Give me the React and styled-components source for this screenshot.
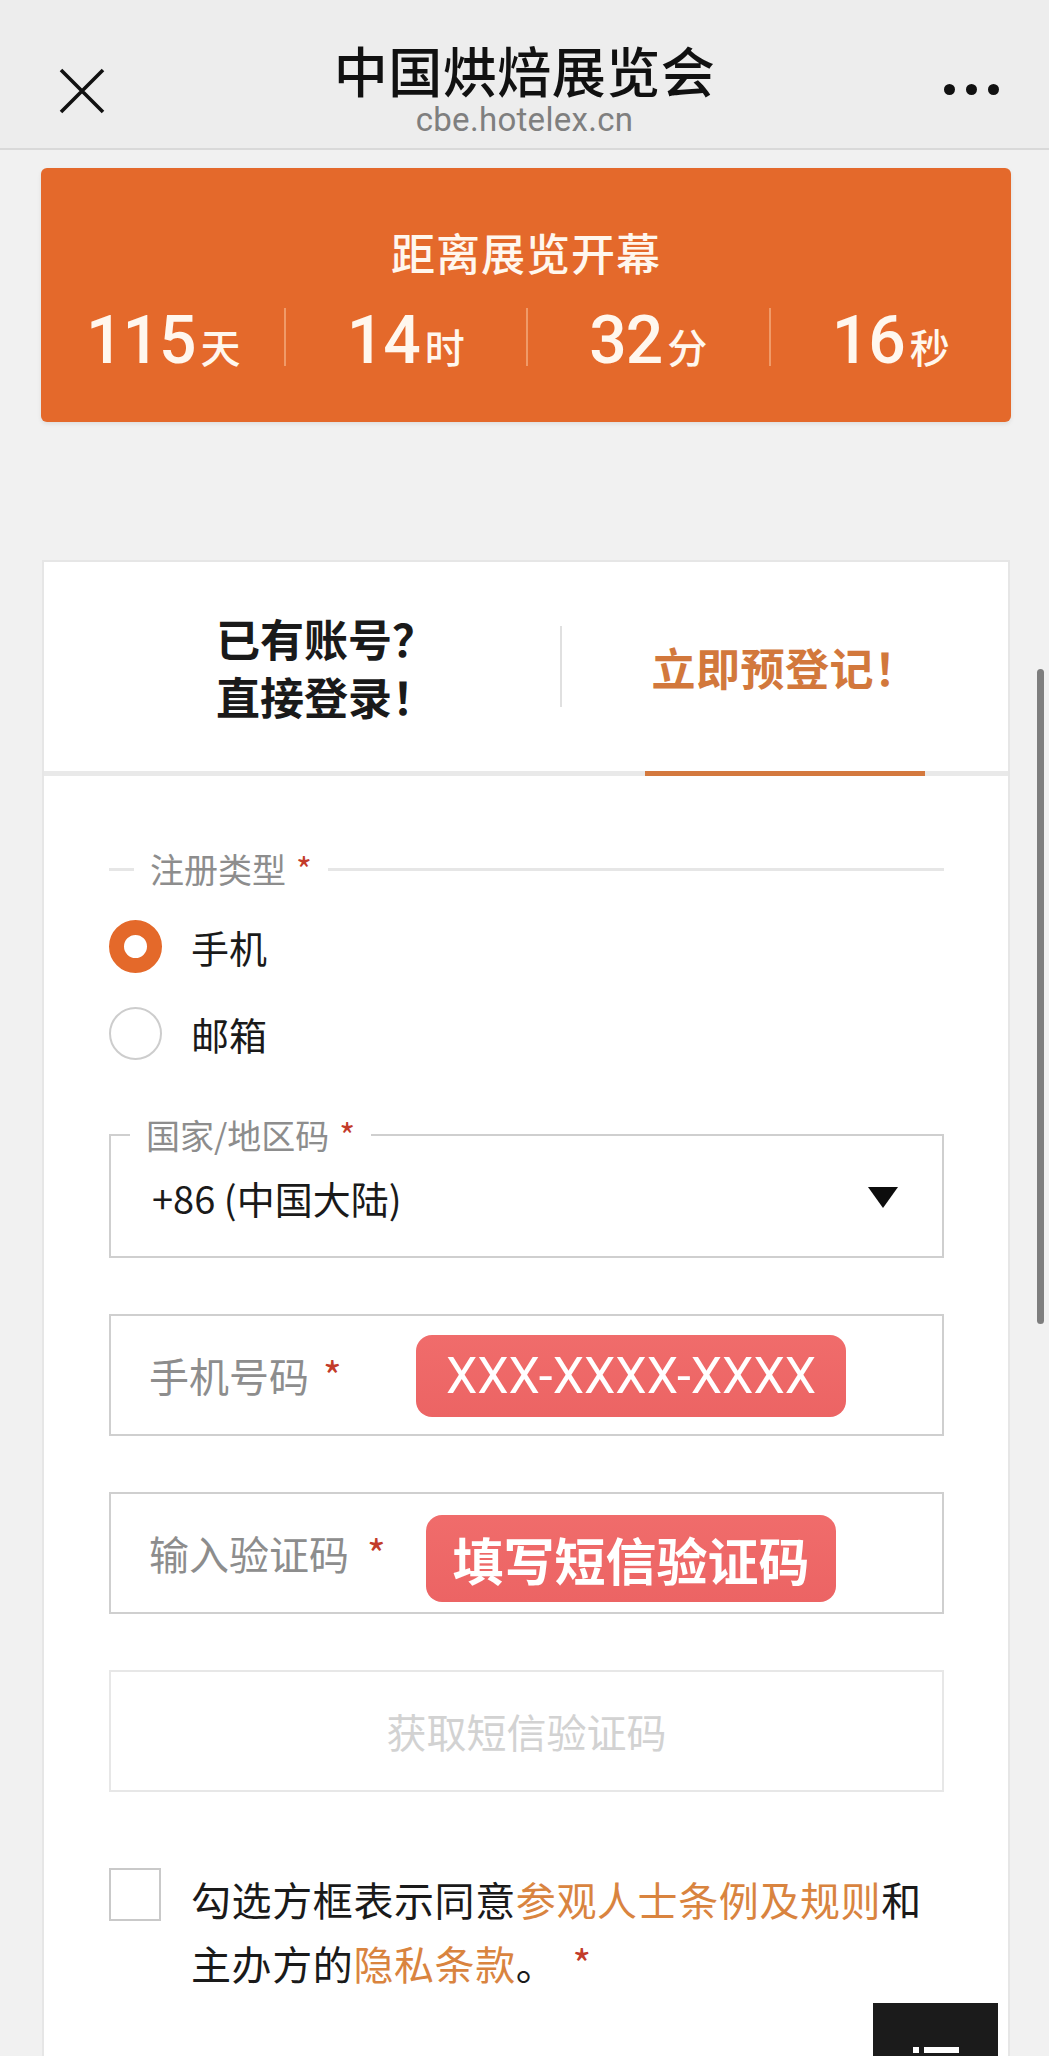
import React from 'react';
import styled, { createGlobalStyle } from 'styled-components';

const GlobalStyle = createGlobalStyle`
  html, body { margin: 0; padding: 0; background: #f1f1f1; overflow: hidden; }
  body { font-family: "Noto Sans CJK SC", "Noto Sans", sans-serif; color: #1f1f1f; }
  *, *::before, *::after { box-sizing: border-box; }
`;

const Page = styled.div`
  position: relative;
  width: 1049px;
  height: 2056px;
  overflow: hidden;
  background: #f1f1f1;
`;

/* ---------- header ---------- */
const Header = styled.header`
  height: 150px;
  background: #ededed;
  border-bottom: 2px solid #d9d9d9;
  display: grid;
  grid-template-columns: 1fr auto 1fr;
  align-items: start;
`;

const CloseButton = styled.button`
  justify-self: start;
  margin: 67px 0 0 58px;
  padding: 0;
  border: 0;
  background: none;
  width: 48px;
  height: 48px;
  display: flex;
`;

const TitleBlock = styled.div`
  padding-top: 40px;
  text-align: center;
`;

const Title = styled.h1`
  margin: 0;
  font-size: 54px;
  line-height: 60px;
  font-weight: 500;
  color: #111;
  letter-spacing: 0.5px;
`;

const Subtitle = styled.div`
  font-family: Roboto, "Liberation Sans", sans-serif;
  font-size: 33px;
  line-height: 40px;
  color: #7f7f7f;
  letter-spacing: 0.3px;
`;

const MoreButton = styled.div`
  justify-self: end;
  margin: 84px 50px 0 0;
  display: flex;
  gap: 11px;
`;

const Dot = styled.span`
  width: 11px;
  height: 11px;
  border-radius: 50%;
  background: #111;
`;

/* ---------- countdown ---------- */
const Countdown = styled.section`
  margin: 18px 38px 0 41px;
  height: 254px;
  border-radius: 6px;
  background: #e4692b;
  box-shadow: 0 2px 4px rgba(0, 0, 0, 0.08);
  padding-top: 58px;
  color: #fff7ee;
`;

const CountTitle = styled.div`
  text-align: center;
  font-size: 44px;
  line-height: 52px;
  font-weight: 500;
  letter-spacing: 1px;
`;

const CountRow = styled.div`
  margin-top: 30px;
  display: grid;
  grid-template-columns: repeat(4, 1fr);
`;

const CountCell = styled.div`
  height: 58px;
  display: flex;
  align-items: baseline;
  justify-content: center;
  border-left: 2px solid ${p => (p.$first ? 'transparent' : 'rgba(255, 214, 180, 0.45)')};
`;

const CountNum = styled.span`
  font-family: Roboto, "Liberation Sans", sans-serif;
  font-size: 66px;
  line-height: 66px;
  font-weight: 500;
  letter-spacing: -1px;
`;

const CountUnit = styled.span`
  margin-left: 5px;
  font-size: 40px;
  font-weight: 500;
`;

/* ---------- form card ---------- */
const Card = styled.section`
  margin: 138px 39px 0 42px;
  background: #fff;
  border: 2px solid #e6e6e6;
  border-bottom: 0;
  padding-bottom: 300px;
`;

const TabRow = styled.div`
  height: 214px;
  display: flex;
  border-bottom: 5px solid #e9e9e9;
`;

const LeftTab = styled.div`
  flex: 0 0 516px;
  display: flex;
  align-items: center;
  justify-content: center;
  padding-left: 48px;
  font-size: 44px;
  line-height: 58px;
  font-weight: 600;
  color: #1a1a1a;
`;

const TabDivider = styled.div`
  width: 2px;
  height: 81px;
  align-self: center;
  background: #e0e0e0;
`;

const RightTab = styled.div`
  flex: 1;
  display: flex;
  flex-direction: column;
  align-items: center;
  margin-bottom: -5px;
`;

const TabLabel = styled.div`
  flex: 1;
  display: flex;
  align-items: center;
  font-size: 44px;
  font-weight: 600;
  color: #d2783c;
  letter-spacing: 0.5px;
`;

const TabIndicator = styled.div`
  width: 280px;
  height: 5px;
  background: #d4793e;
`;

const Form = styled.form`
  padding: 0 64px 0 65px;
`;

const Group = styled.fieldset`
  margin: ${p => p.$mt}px 0 0;
  padding: 0 0 ${p => (p.$boxed ? 23 : 0)}px;
  border: 0;
  border-top: 3px solid #e6e6e6;
  ${p => p.$boxed && `border: 2px solid #cfcfcf;`}
  min-width: 0;
`;

const Legend = styled.legend`
  margin-left: ${p => p.$ml}px;
  padding: 0 16px 0 16px;
  font-size: 34px;
  line-height: 40px;
  color: #8d8d8d;
`;

const Req = styled.span`
  color: #c33b2a;
  margin-left: ${p => p.$ml ?? 10}px;
`;

const RadioList = styled.div`
  margin-top: 29px;
  display: flex;
  flex-direction: column;
  gap: 31px;
`;

const RadioRow = styled.label`
  height: 56px;
  display: flex;
  align-items: center;
`;

const RadioDot = styled.span`
  width: 53px;
  height: 53px;
  border-radius: 50%;
  background: #fff;
  border: ${p => (p.$checked ? '15px solid #e4692a' : '2px solid #cdcdcd')};
  flex-shrink: 0;
`;

const RadioText = styled.span`
  margin-left: 29px;
  font-size: 38px;
  color: #1a1a1a;
`;

const SelectRow = styled.div`
  margin-top: 6px;
  height: 72px;
  padding: 0 44px 0 41px;
  display: flex;
  align-items: center;
  justify-content: space-between;
  font-size: 38px;
  color: #1a1a1a;
`;

const Caret = styled.span`
  width: 0;
  height: 0;
  border-left: 15px solid transparent;
  border-right: 15px solid transparent;
  border-top: 21px solid #0d0d0d;
`;

const InputBox = styled.div`
  position: relative;
  margin-top: 56px;
  height: 122px;
  border: 2px solid #cfcfcf;
  display: flex;
  align-items: center;
  padding-left: 38px;
`;

const Placeholder = styled.span`
  font-size: 40px;
  color: #8d8d8d;
`;

const Annotation = styled.span`
  position: absolute;
  left: ${p => p.$left}px;
  top: ${p => p.$top}px;
  width: ${p => p.$w}px;
  height: ${p => p.$h}px;
  border-radius: 16px;
  background: linear-gradient(180deg, #f06c6b, #ec6464);
  color: #fff;
  display: flex;
  align-items: center;
  justify-content: center;
  font-family: ${p => (p.$latin ? 'Roboto, "Liberation Sans", sans-serif' : '"Noto Sans CJK SC", sans-serif')};
  font-size: ${p => p.$fs}px;
  font-weight: ${p => (p.$latin ? 400 : 700)};
`;

const SmsButton = styled.button`
  display: block;
  width: 100%;
  margin-top: 56px;
  height: 122px;
  border: 2px solid #e7e7e7;
  background: #fff;
  font-family: "Noto Sans CJK SC", sans-serif;
  font-size: 40px;
  color: #d2d2d2;
`;

const Agree = styled.div`
  margin-top: 75px;
  display: flex;
  align-items: flex-start;
`;

const CheckBox = styled.span`
  margin-top: 1px;
  width: 52px;
  height: 53px;
  border: 2px solid #c9c9c9;
  flex-shrink: 0;
`;

const AgreeText = styled.p`
  margin: 0 0 0 30px;
  font-size: 40px;
  line-height: 64px;
  letter-spacing: 0.6px;
  color: #1a1a1a;
`;

const Link = styled.span`
  color: #d9843f;
`;

/* ---------- overlays ---------- */
const FloatButton = styled.div`
  position: absolute;
  left: 873px;
  top: 2003px;
  width: 125px;
  height: 125px;
  background: #1b1b1b;
  padding: 44px 0 0 40px;
`;

const ScrollThumb = styled.div`
  position: absolute;
  left: 1037px;
  top: 669px;
  width: 7px;
  height: 655px;
  border-radius: 4px;
  background: #7e7e7e;
`;

export default function App() {
  const counts = [
    ['115', '天'],
    ['14', '时'],
    ['32', '分'],
    ['16', '秒'],
  ];
  return (
    <Page>
      <GlobalStyle />
      <Header>
        <CloseButton aria-label="关闭">
          <svg width="48" height="48" viewBox="0 0 48 48">
            <path d="M3 3 L45 45 M45 3 L3 45" stroke="#111" strokeWidth="3.6" fill="none" />
          </svg>
        </CloseButton>
        <TitleBlock>
          <Title>中国烘焙展览会</Title>
          <Subtitle>cbe.hotelex.cn</Subtitle>
        </TitleBlock>
        <MoreButton>
          <Dot />
          <Dot />
          <Dot />
        </MoreButton>
      </Header>

      <Countdown>
        <CountTitle>距离展览开幕</CountTitle>
        <CountRow>
          {counts.map(([n, u], i) => (
            <CountCell key={u} $first={i === 0}>
              <CountNum>{n}</CountNum>
              <CountUnit>{u}</CountUnit>
            </CountCell>
          ))}
        </CountRow>
      </Countdown>

      <Card>
        <TabRow>
          <LeftTab>
            <div>
              已有账号？
              <br />
              直接登录！
            </div>
          </LeftTab>
          <TabDivider />
          <RightTab>
            <TabLabel>立即预登记！</TabLabel>
            <TabIndicator />
          </RightTab>
        </TabRow>

        <Form>
          <Group $mt={73}>
            <Legend $ml={25}>
              注册类型<Req>*</Req>
            </Legend>
            <RadioList>
              <RadioRow>
                <RadioDot $checked />
                <RadioText>手机</RadioText>
              </RadioRow>
              <RadioRow>
                <RadioDot />
                <RadioText>邮箱</RadioText>
              </RadioRow>
            </RadioList>
          </Group>

          <Group $mt={54} $boxed>
            <Legend $ml={19}>
              国家/地区码<Req>*</Req>
            </Legend>
            <SelectRow>
              <span>+86 (中国大陆)</span>
              <Caret />
            </SelectRow>
          </Group>

          <InputBox>
            <Placeholder>
              手机号码<Req $ml={14}>*</Req>
            </Placeholder>
            <Annotation $left={305} $top={19} $w={430} $h={82} $fs={50} $latin>
              XXX-XXXX-XXXX
            </Annotation>
          </InputBox>

          <InputBox>
            <Placeholder>
              输入验证码<Req $ml={18}>*</Req>
            </Placeholder>
            <Annotation $left={315} $top={21} $w={410} $h={87} $fs={51}>
              填写短信验证码
            </Annotation>
          </InputBox>

          <SmsButton type="button">获取短信验证码</SmsButton>

          <Agree>
            <CheckBox />
            <AgreeText>
              勾选方框表示同意<Link>参观人士条例及规则</Link>和主办方的<Link>隐私条款</Link>。
              <Req $ml={16}>*</Req>
            </AgreeText>
          </Agree>
        </Form>
      </Card>

      <FloatButton>
        <svg width="46" height="46" viewBox="0 0 46 46">
          <rect x="0" y="0" width="6" height="6" fill="#fff" />
          <rect x="11" y="0" width="35" height="6" fill="#fff" />
          <rect x="0" y="16" width="6" height="6" fill="#fff" />
          <rect x="11" y="16" width="35" height="6" fill="#fff" />
          <rect x="0" y="32" width="6" height="6" fill="#fff" />
          <rect x="11" y="32" width="35" height="6" fill="#fff" />
        </svg>
      </FloatButton>
      <ScrollThumb />
    </Page>
  );
}
